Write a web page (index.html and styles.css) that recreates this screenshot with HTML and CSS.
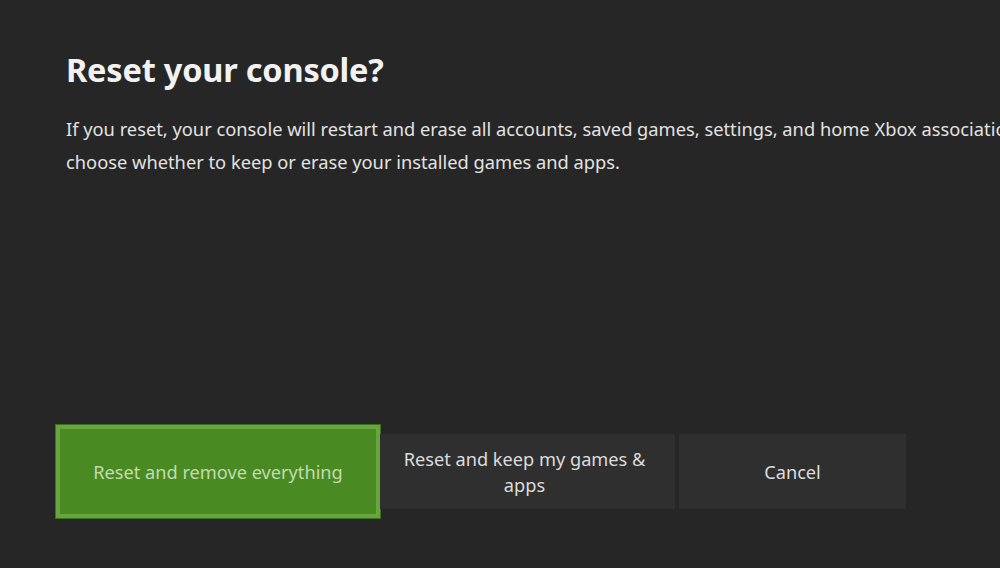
FILE: index.html
```html
<!DOCTYPE html>
<html lang="en">
<head>
<meta charset="utf-8">
<title>Reset your console?</title>
<link rel="stylesheet" href="styles.css">
</head>
<body>
<main class="dialog">
  <section class="content">
    <h1 class="title">Reset your console?</h1>
    <p class="desc"><span class="line">If you reset, your console will restart and erase all accounts, saved games, settings, and home Xbox associations. You can</span><span class="line">choose whether to keep or erase your installed games and apps.</span></p>
  </section>
  <div class="actions">
    <button class="btn btn-focus">Reset and remove everything</button>
    <button class="btn btn-keep">Reset and keep my games &amp; apps</button>
    <button class="btn btn-cancel">Cancel</button>
  </div>
</main>
</body>
</html>
```
FILE: styles.css
```css
html, body {
  margin: 0;
  padding: 0;
  height: 100%;
}
body {
  background: #262626;
  overflow: hidden;
  font-family: "Noto Sans", "Open Sans", sans-serif;
  color: #e6e6e6;
}
.dialog {
  display: flex;
  flex-direction: column;
  height: 568px;
}
.content {
  padding: 48px 0 0 66px;
  overflow: hidden;
}
.title {
  margin: 0;
  font-size: 32.5px;
  font-weight: 700;
  color: #f2f2f2;
  line-height: 44px;
  letter-spacing: -0.2px;
}
.desc {
  margin: 20px 0 0;
  font-size: 18.3px;
  line-height: 33px;
  color: #e2e2e2;
  white-space: nowrap;
}
.line {
  display: block;
}
.actions {
  margin-top: auto;
  margin-bottom: 50px;
  padding-left: 56px;
  display: flex;
  align-items: center;
  gap: 4px;
}
.btn {
  font-family: inherit;
  font-size: 18.2px;
  line-height: 26px;
  border: none;
  margin: 0;
  padding: 0 20px;
  height: 75px;
  background: #2f2f2f;
  color: #dcdcdc;
  text-align: center;
  cursor: pointer;
}
.btn-focus {
  width: 324px;
  height: 93px;
  background: #4a8a22;
  border: 4px solid #68a53d;
  color: #c2dcae;
  margin-right: -4px;
  box-shadow: 0 0 0 1px #3d6f1f;
}
.btn-keep {
  width: 295px;
  padding: 0 24px 0 18px;
}
.btn-cancel {
  width: 227px;
}
```
